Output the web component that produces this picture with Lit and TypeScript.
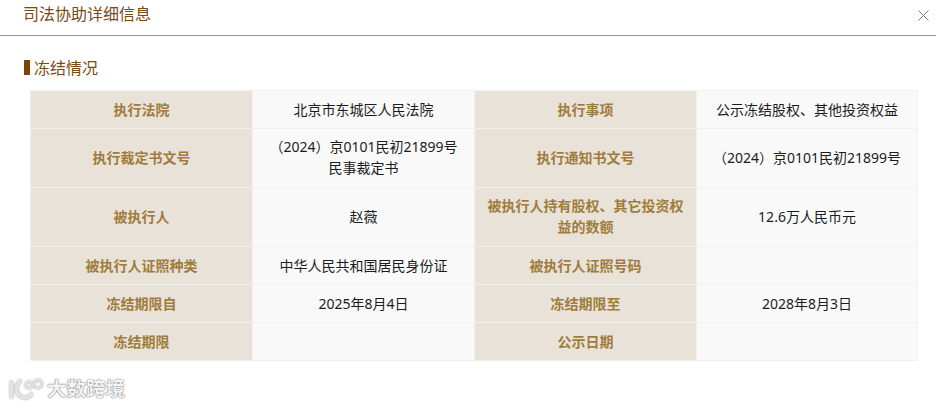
import { LitElement, html, css, svg } from "lit";
import { customElement } from "lit/decorators.js";

const rows: [string, string, string, string][] = [
  ["执行法院", "北京市东城区人民法院", "执行事项", "公示冻结股权、其他投资权益"],
  ["执行裁定书文号", "（2024）京0101民初21899号\n民事裁定书", "执行通知书文号", "（2024）京0101民初21899号"],
  ["被执行人", "赵薇", "被执行人持有股权、其它投资权益的数额", "12.6万人民币元"],
  ["被执行人证照种类", "中华人民共和国居民身份证", "被执行人证照号码", ""],
  ["冻结期限自", "2025年8月4日", "冻结期限至", "2028年8月3日"],
  ["冻结期限", "", "公示日期", ""],
];
const heights = [38, 59, 59, 38, 38, 38];

@customElement("app-root")
export class AppRoot extends LitElement {
  static styles = css`
    :host {
      display: block;
      width: 951px;
      height: 408px;
      overflow: hidden;
      background: #fff;
      font-family: "Noto Sans", "Noto Sans CJK SC", sans-serif;
      font-size: 14px;
      color: #1c1c1c;
    }
    .page { width: 936px; display: flex; flex-direction: column; }
    .head {
      height: 35px;
      border-bottom: 1px solid #999;
      display: flex;
      justify-content: space-between;
      padding: 0 7px 0 23px;
    }
    .title { font-size: 16px; line-height: 28px; color: #7a4a14; }
    .close { margin-top: 10px; }
    .section {
      margin: 19px 0 0 24px;
      display: flex;
      align-items: center;
      gap: 4px;
      height: 24px;
      font-size: 16px;
      color: #7a4a14;
    }
    .mark { width: 6px; height: 15px; background: #7f4303; }
    table {
      border-collapse: collapse;
      table-layout: fixed;
      margin: 11px 0 0 30px;
      width: 887px;
    }
    .c { width: 222px; }
    .c4 { width: 221px; }
    td {
      border: 1px solid #f0f0f0;
      padding: 0 12px;
      text-align: center;
      line-height: 21px;
      box-sizing: border-box;
    }
    .tall td { padding-bottom: 2px; }
    .l { background: #e8e2d8; color: #a07c3c; font-weight: 700; }
    .v { background: #f9f9f9; white-space: pre-line; }
    .wm {
      position: absolute;
      left: 8px;
      top: 375px;
      display: flex;
      align-items: center;
      gap: 4px;
    }
    .wmt {
      font-size: 19.500px;
      line-height: 28px;
      font-weight: 700;
      color: #f4f4f4;
      text-shadow: 0 0 1.500px #666, 0 0 1px #888;
    }
    .logo { filter: drop-shadow(0 0 1px #999); }
  `;

  private logo() {
    return html`<svg class="logo" width="35" height="26" viewBox="0 0 35 26" fill="none">
      ${svg`<g stroke="#e4e4e4" stroke-width="3.200" stroke-linecap="round">
        <path d="M3.500 6v15"/>
        <path d="M12 5C7 10 7 18 14 21c4 1.500 8 0 9.500-3"/>
        <circle cx="21" cy="9" r="3.400" stroke-width="1.800"/>
        <circle cx="30" cy="8" r="4" stroke-width="1.800"/>
      </g>`}
    </svg>`;
  }

  render() {
    return html`
      <div class="page">
        <div class="head">
          <div class="title">司法协助详细信息</div>
          <svg class="close" width="11" height="11" viewBox="0 0 11 11" fill="none">
            <path d="M.5.5l10 10M10.500.5l-10 10" stroke="#777" stroke-width="1"/>
          </svg>
        </div>
        <div class="section"><span class="mark"></span><span>冻结情况</span></div>
        <table>
          <colgroup><col class="c"/><col class="c"/><col class="c"/><col class="c4"/></colgroup>
          ${rows.map(
            (r, i) => html`<tr class=${heights[i] > 50 ? "tall" : ""} style="height:${heights[i]}px">
              <td class="l">${r[0]}</td><td class="v">${r[1]}</td>
              <td class="l">${r[2]}</td><td class="v">${r[3]}</td>
            </tr>`
          )}
        </table>
      </div>
      <div class="wm">${this.logo()}<span class="wmt">大数跨境</span></div>
    `;
  }
}
